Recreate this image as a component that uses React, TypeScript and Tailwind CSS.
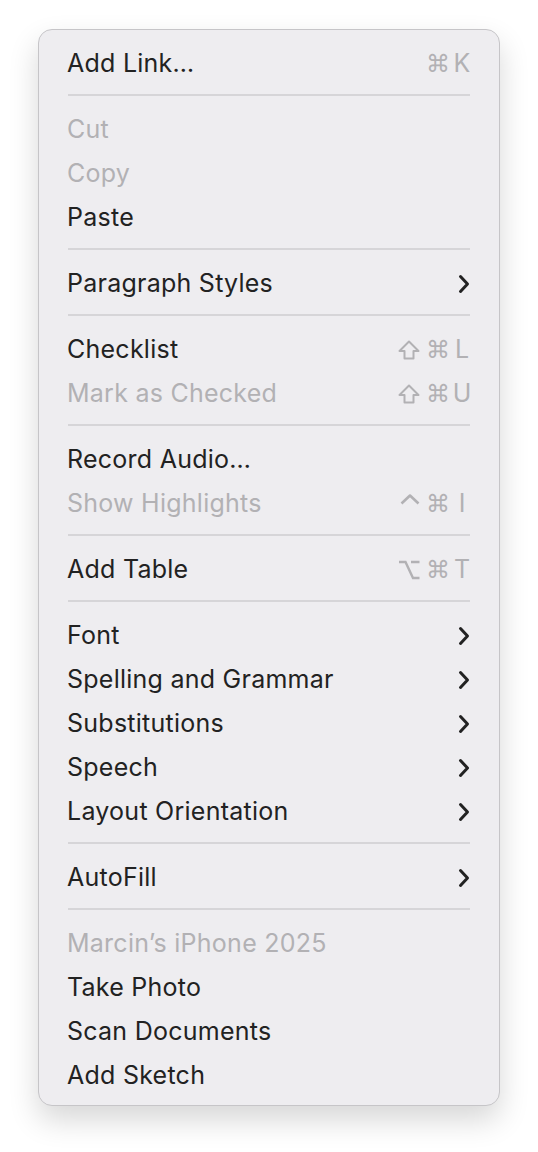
import { FC, ReactNode } from 'react'

type Item =
  | { type: 'sep' }
  | { type: 'item'; label: string; disabled?: boolean; mod?: 'shift' | 'ctrl' | 'opt'; key_?: string; submenu?: boolean };

const items: Item[] = [
  { type: 'item', label: 'Add Link…', key_: 'K' },
  { type: 'sep' },
  { type: 'item', label: 'Cut', disabled: true },
  { type: 'item', label: 'Copy', disabled: true },
  { type: 'item', label: 'Paste' },
  { type: 'sep' },
  { type: 'item', label: 'Paragraph Styles', submenu: true },
  { type: 'sep' },
  { type: 'item', label: 'Checklist', mod: 'shift', key_: 'L' },
  { type: 'item', label: 'Mark as Checked', disabled: true, mod: 'shift', key_: 'U' },
  { type: 'sep' },
  { type: 'item', label: 'Record Audio…' },
  { type: 'item', label: 'Show Highlights', disabled: true, mod: 'ctrl', key_: 'I' },
  { type: 'sep' },
  { type: 'item', label: 'Add Table', mod: 'opt', key_: 'T' },
  { type: 'sep' },
  { type: 'item', label: 'Font', submenu: true },
  { type: 'item', label: 'Spelling and Grammar', submenu: true },
  { type: 'item', label: 'Substitutions', submenu: true },
  { type: 'item', label: 'Speech', submenu: true },
  { type: 'item', label: 'Layout Orientation', submenu: true },
  { type: 'sep' },
  { type: 'item', label: 'AutoFill', submenu: true },
  { type: 'sep' },
  { type: 'item', label: 'Marcin’s iPhone 2025', disabled: true },
  { type: 'item', label: 'Take Photo' },
  { type: 'item', label: 'Scan Documents' },
  { type: 'item', label: 'Add Sketch' },
];

const Chevron: FC = () => (
  <svg width="14" height="20" viewBox="0 0 14 20" className="text-[#222]">
    <path d="M3.5 2.5 L10.5 10 L3.5 17.5" fill="none" stroke="currentColor" strokeWidth="3" strokeLinecap="round" strokeLinejoin="round" />
  </svg>
);

// modifier glyphs, drawn to match the menu's key symbols
const mods: Record<string, ReactNode> = {
  shift: (
    <svg width="22" height="20" viewBox="0 0 22 20">
      <path d="M11 1.5 L20.5 11 H15.5 V18.5 H6.5 V11 H1.5 Z" fill="none" stroke="currentColor" strokeWidth="2" strokeLinejoin="round" />
    </svg>
  ),
  ctrl: (
    <svg width="22" height="20" viewBox="0 0 22 20">
      <path d="M3.5 9.5 L12 1.5 L20.5 9.5" fill="none" stroke="currentColor" strokeWidth="2.6" strokeLinejoin="round" />
    </svg>
  ),
  opt: (
    <svg width="22" height="20" viewBox="0 0 22 20">
      <path d="M1 2 H7.5 L15 18 H21.5 M13 2 H21.5" fill="none" stroke="currentColor" strokeWidth="2.4" />
    </svg>
  ),
};

const App: FC = () => {
  return (
    <div className="min-h-screen bg-white pt-[29px] pl-[38px]" style={{ fontFamily: 'Inter, "Noto Sans", sans-serif' }}>
      <div className="w-[462px] rounded-[14px] border border-[#c6c5c8] bg-[#eeedf0] pt-[10px] pb-[9px] shadow-[0_14px_30px_rgba(0,0,0,0.16)]">
        {items.map((it, i) =>
          it.type === 'sep' ? (
            <div key={i} className="flex h-[22px] items-center px-[29px]">
              <div className="h-[2px] w-full bg-[#d6d5d8]" />
            </div>
          ) : (
            <div key={i} className="flex h-[44px] items-center justify-between pt-[4px] pl-[28px] pr-[28px]">
              <span className={`text-[25px] tracking-[0.25px] ${it.disabled ? 'text-[#b2b1b4]' : 'text-[#222222]'}`}>
                {it.label}
              </span>
              {it.key_ && (
                <span className="mr-[-3px] flex items-center text-[25px] text-[#b2b1b4]">
                  {it.mod && <span className="mr-[6px] flex">{mods[it.mod]}</span>}
                  <span className="w-[18px] text-center" style={{ fontFamily: '"DejaVu Sans", sans-serif', fontSize: 24 }}>⌘</span>
                  <span className="ml-[6px] w-[24px] text-center">{it.key_}</span>
                </span>
              )}
              {it.submenu && <Chevron />}
            </div>
          )
        )}
      </div>
    </div>
  )
}

export default App
